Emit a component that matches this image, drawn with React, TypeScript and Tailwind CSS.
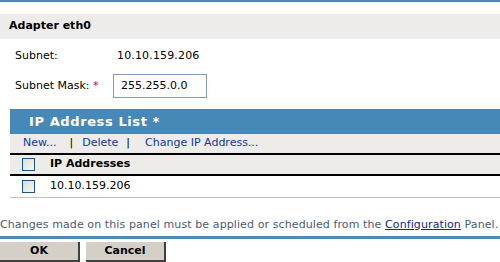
import React from "react";

function Check() {
  return (
    <span className="inline-block w-[13px] h-[13px] border border-[#1c5180] bg-gradient-to-br from-[#dcdcd6] to-[#f7f7f4]" />
  );
}

export default function App() {
  return (
    <div className="w-[500px] h-[262px] overflow-hidden bg-white flex flex-col font-['DejaVu_Sans',Verdana,sans-serif] text-[11px] text-black">
      <div className="h-[2px] bg-[#4a8ab8]" />
      <div className="h-[12px]" />
      <div className="h-[25px] bg-[#eeece8] flex items-center pl-[9px] font-bold">Adapter eth0</div>

      <div className="pl-[15px] flex flex-col">
        <div className="h-[35px] flex items-center">
          <span className="w-[102px]">Subnet:</span>
          <span className="tracking-[0.15px]">10.10.159.206</span>
        </div>
        <div className="h-[24px] flex items-center">
          <span className="w-[98px]">
            Subnet Mask: <span className="text-[#e00000]">*</span>
          </span>
          <div className="w-[94px] h-[24px] border border-[#7f9db9] flex items-center pl-[7px]">255.255.0.0</div>
        </div>
      </div>

      <div className="h-[11px]" />
      <div className="ml-[10px] flex flex-col">
        <div className="h-[25px] bg-[#4689b8] flex items-center pl-[19px] text-white font-bold text-[13px] tracking-[0.6px]">
          IP Address List *
        </div>
        <div className="h-[21px] bg-[#eeece8] flex items-center pl-[13px] text-[#0b3a9c] border-b-[2px] border-black">
          <span>New...</span>
          <span className="ml-[13px] mr-[9px] text-black">|</span>
          <span>Delete</span>
          <span className="ml-[8px] mr-[15px] text-black">|</span>
          <span>Change IP Address...</span>
        </div>
        <div className="h-[21px] bg-[#eeece8] flex items-center pl-[12px] font-bold border-b-[2px] border-black">
          <Check />
          <span className="ml-[15px]">IP Addresses</span>
        </div>
        <div className="h-[22px] flex items-center pl-[12px] border-b border-[#c0c0c0]">
          <Check />
          <span className="ml-[15px]">10.10.159.206</span>
        </div>
      </div>

      <div className="h-[38px] flex items-end pb-[3px] text-[#4a5a78] whitespace-nowrap tracking-[0.1px]">
        <span>
          Changes made on this panel must be applied or scheduled from the{" "}
          <span className="text-[#0b2a8c] underline">Configuration</span> Panel.
        </span>
      </div>
      <div className="h-[3px] bg-[#4a8ab8]" />
      <div className="h-[3px]" />
      <div className="flex gap-[6px] font-bold">
        <button className="w-[80px] h-[20px] bg-[#d4d0c8] border-r-[2px] border-b-[2px] border-[#404040] flex items-center justify-center">
          OK
        </button>
        <button className="w-[80px] h-[20px] bg-[#d4d0c8] border-r-[2px] border-b-[2px] border-[#404040] flex items-center justify-center">
          Cancel
        </button>
      </div>
    </div>
  );
}
